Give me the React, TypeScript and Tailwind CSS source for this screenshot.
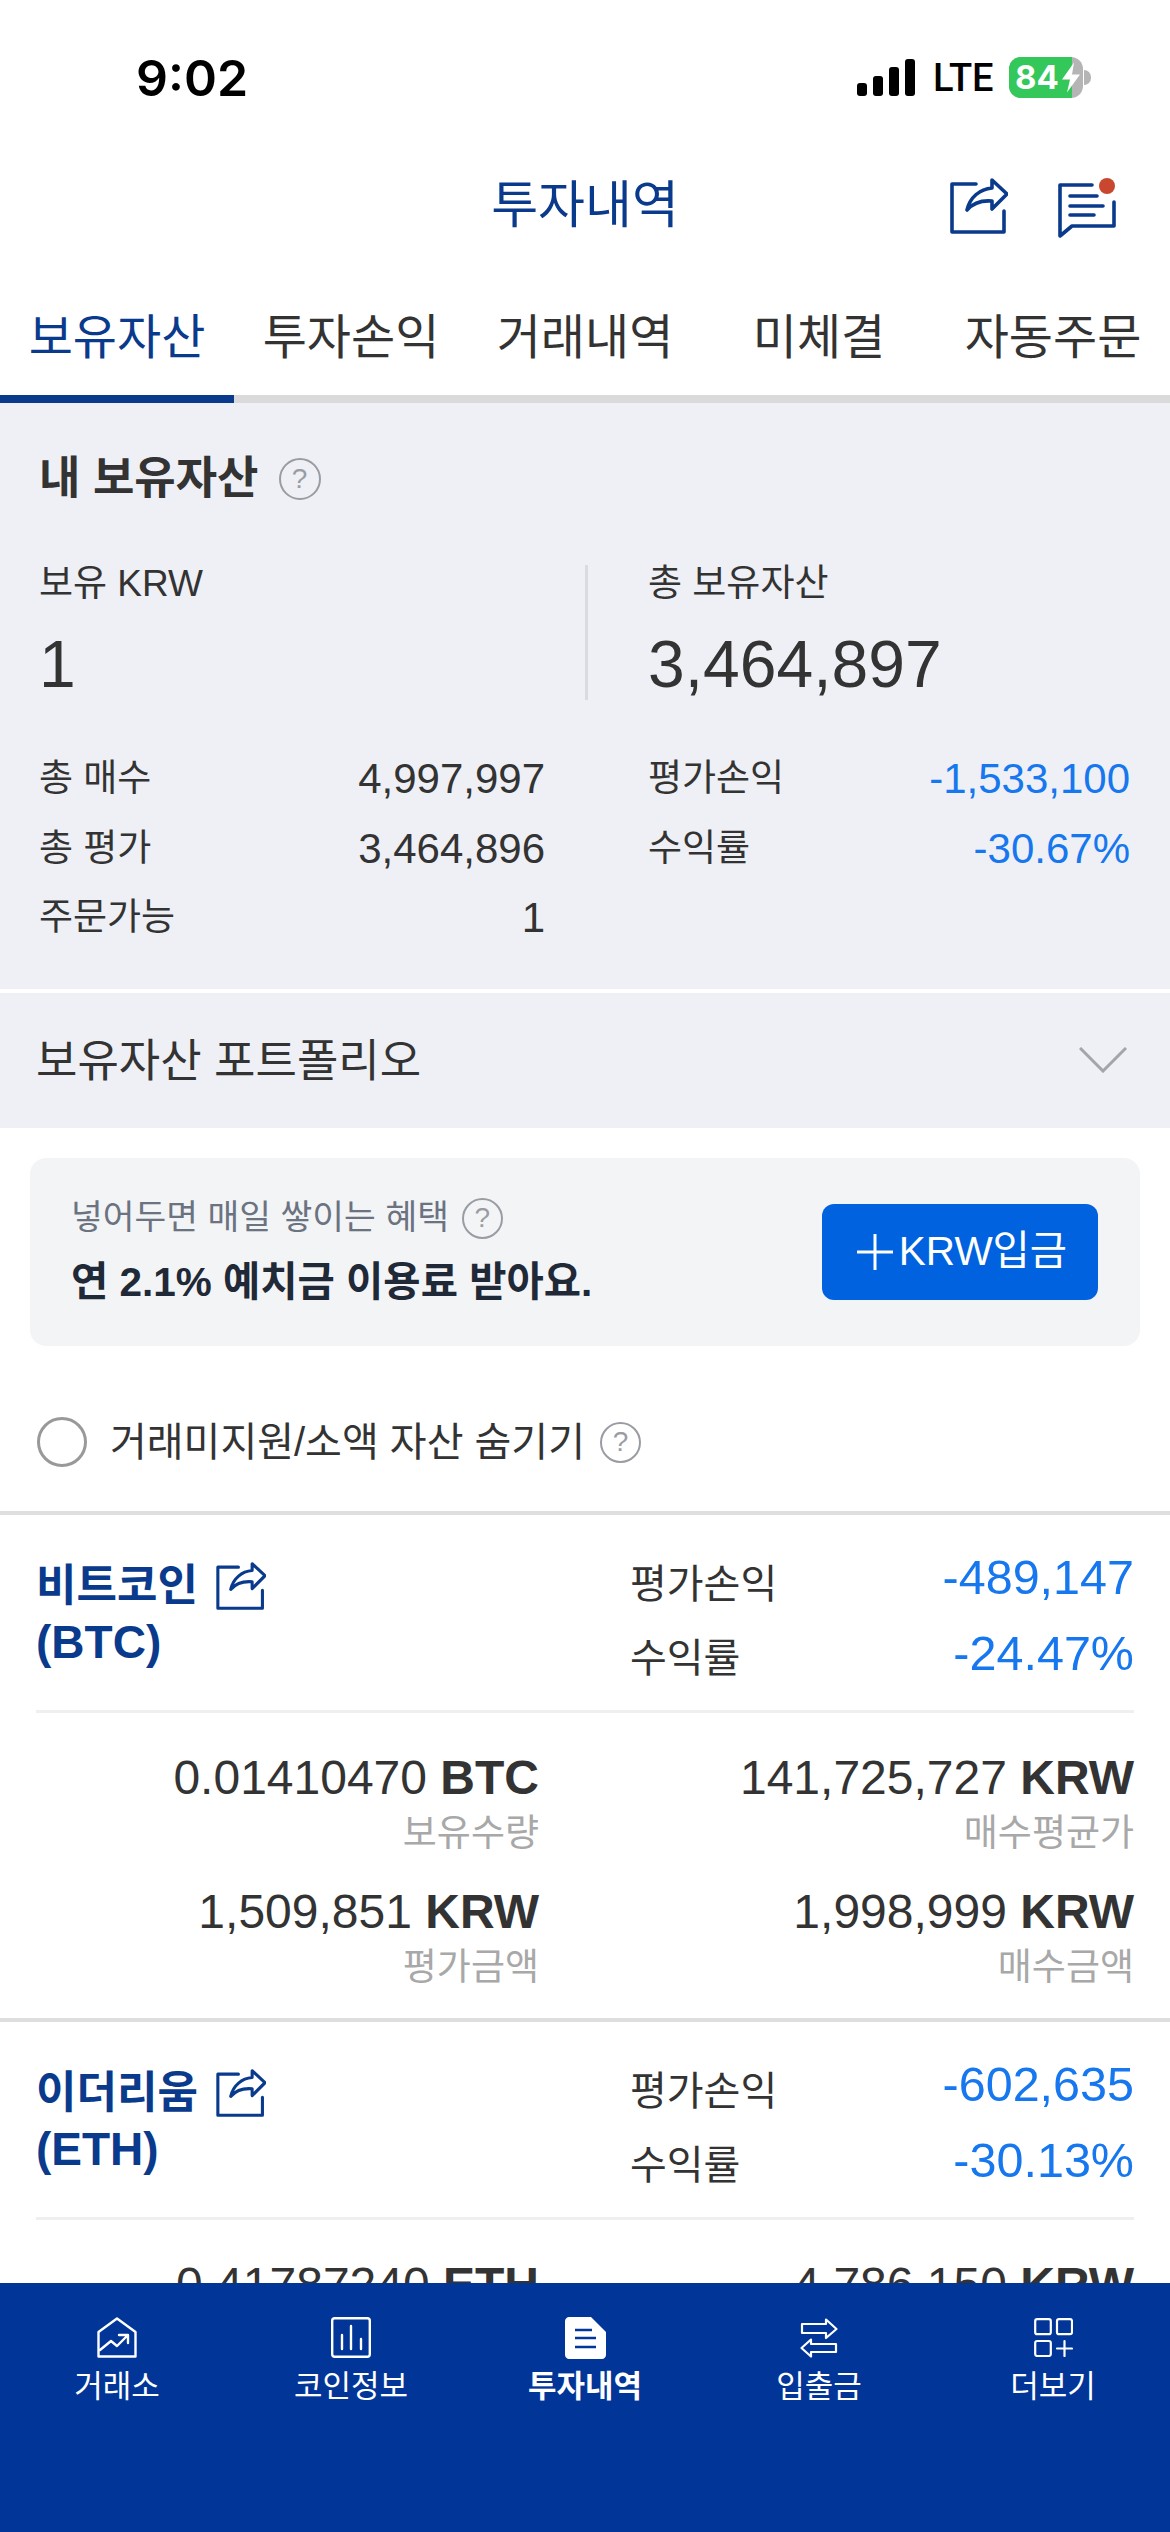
const BLUE = "text-[#0a3a8c]";

const ShareIcon = ({ className }: { className: string }) => (
  <svg viewBox="0 0 58 56" fill="none" stroke="#0a3a8c" strokeWidth="3.6" strokeLinecap="round" strokeLinejoin="round" className={className}>
    <path d="M26 6H2V54H54V33" />
    <path d="M42 2L57 16L42 31V23C30 22 23 25 17 32C20 19 30 11 42 10Z" />
  </svg>
);

const MessageIcon = () => (
  <svg viewBox="0 0 58 60" fill="none" stroke="#0a3a8c" strokeWidth="3.6" strokeLinecap="round" strokeLinejoin="round" className="w-[58px] h-[60px] ml-[50px]">
    <path d="M34 7H2V58L14 48H56V24" />
    <path d="M12 18H39M12 28H45M12 37H36" />
    <circle cx="49" cy="8" r="8" fill="#c9472f" stroke="none" />
  </svg>
);

const Help = ({ className }: { className: string }) => (
  <span className={`flex items-center justify-center rounded-full border-[2.5px] border-[#9a9ca3] text-[#9a9ca3] text-[28px] leading-none shrink-0 ${className}`}>?</span>
);

const Signal = () => (
  <div className="flex items-end gap-[6px] h-[37px]">
    <div className="w-[10px] h-[13px] rounded-[3px] bg-black" />
    <div className="w-[10px] h-[20px] rounded-[3px] bg-black" />
    <div className="w-[10px] h-[29px] rounded-[3px] bg-black" />
    <div className="w-[10px] h-[37px] rounded-[3px] bg-black" />
  </div>
);

const Battery = () => (
  <div className="flex items-center">
    <div className="relative w-[74px] h-[41px] rounded-[12px] overflow-hidden bg-[#b5b5b5]">
      <div className="w-[63px] h-full bg-[#34c759]" />
      <span className="absolute left-[6px] top-0 h-full flex items-center text-white font-bold text-[33px] font-['Inter']">84</span>
      <svg viewBox="0 0 20 30" className="absolute left-[52px] top-[5px] w-[20px] h-[31px]">
        <path d="M13 0L1 17H9L6 30L19 12H11Z" fill="#fff" />
      </svg>
    </div>
    <div className="w-[7px] h-[15px] rounded-r-full bg-[#b5b5b5] ml-[1px]" />
  </div>
);

const tabs = ["보유자산", "투자손익", "거래내역", "미체결", "자동주문"];

const Row = ({ label, value, blue }: { label: string; value?: string; blue?: boolean }) => (
  <div className="h-[69.5px] flex items-center justify-between">
    <span className="text-[37px] text-[#333]">{label}</span>
    <span className={`text-[42px] ${blue ? "text-[#1677ee]" : "text-[#333]"}`}>{value}</span>
  </div>
);

const Amount = ({ value, unit, label }: { value: string; unit: string; label: string }) => (
  <div className="text-right">
    <div className="h-[56px] leading-[56px] text-[48px] text-[#333] whitespace-nowrap">
      {value} <b>{unit}</b>
    </div>
    <div className="h-[40px] leading-[40px] mt-[8px] text-[37px] text-[#a8a8a8]">{label}</div>
  </div>
);

type Coin = {
  name: string;
  symbol: string;
  pnl: string;
  rate: string;
  amounts: { value: string; unit: string; label: string }[];
};

const coins: Coin[] = [
  {
    name: "비트코인",
    symbol: "BTC",
    pnl: "-489,147",
    rate: "-24.47%",
    amounts: [
      { value: "0.01410470", unit: "BTC", label: "보유수량" },
      { value: "141,725,727", unit: "KRW", label: "매수평균가" },
      { value: "1,509,851", unit: "KRW", label: "평가금액" },
      { value: "1,998,999", unit: "KRW", label: "매수금액" },
    ],
  },
  {
    name: "이더리움",
    symbol: "ETH",
    pnl: "-602,635",
    rate: "-30.13%",
    amounts: [
      { value: "0.41787240", unit: "ETH", label: "보유수량" },
      { value: "4,786,150", unit: "KRW", label: "매수평균가" },
    ],
  },
];

const CoinCard = ({ coin }: { coin: Coin }) => (
  <div className="border-b-4 border-[#dedede]">
    <div className="mx-[36px] h-[198px] border-b-[3px] border-[#efefef] flex justify-between">
      <div className={`pt-[46px] font-bold ${BLUE}`}>
        <div className="h-[50px] flex items-center leading-none text-[44px]">
          {coin.name}
          <ShareIcon className="w-[50px] h-[48px] ml-[18px]" />
        </div>
        <div className="h-[50px] mt-[6px] flex items-center leading-none text-[46px]">({coin.symbol})</div>
      </div>
      <div className="w-[504px] pt-[35px] flex flex-col gap-[16px]">
        <div className="h-[60px] flex items-center justify-between">
          <span className="text-[40px] text-[#333] pt-[8px]">평가손익</span>
          <span className="text-[48.5px] text-[#1677ee] pb-[4px]">{coin.pnl}</span>
        </div>
        <div className="h-[60px] flex items-center justify-between">
          <span className="text-[40px] text-[#333] pt-[5px]">수익률</span>
          <span className="text-[48.5px] text-[#1677ee] pb-[4px]">{coin.rate}</span>
        </div>
      </div>
    </div>
    <div className="grid grid-cols-[503px_595px] px-[36px] pt-[37px] pb-[30px] gap-y-[30px]">
      {coin.amounts.map((a) => (
        <Amount key={a.label} value={a.value} unit={a.unit} label={a.label} />
      ))}
    </div>
  </div>
);

const navIcon = "fill-none stroke-white";

const nav = [
  {
    label: "거래소",
    icon: (
      <svg viewBox="0 0 40 41" strokeWidth="2.4" strokeLinecap="round" strokeLinejoin="round" className={`w-[40px] h-[41px] ${navIcon}`}>
        <path d="M20 1.5L38.5 15V39.5H1.5V15Z" />
        <path d="M3 33L14 24L20 29L30 19M22 18H31V26" />
      </svg>
    ),
  },
  {
    label: "코인정보",
    icon: (
      <svg viewBox="0 0 40 41" strokeWidth="2.4" strokeLinecap="round" strokeLinejoin="round" className={`w-[40px] h-[41px] ${navIcon}`}>
        <rect x="1.2" y="1.2" width="37.6" height="38.6" rx="2.5" />
        <path d="M11 18V32M20 9V32M30 22V32" />
      </svg>
    ),
  },
  {
    label: "투자내역",
    active: true,
    icon: (
      <svg viewBox="0 0 41 42" className="w-[41px] h-[42px]">
        <path d="M4 0H26L41 15V38C41 40 39 42 37 42H4C2 42 0 40 0 38V4C0 2 2 0 4 0Z" fill="#fff" />
        <path d="M10 13H27M10 21H31M10 30H31" stroke="#013597" strokeWidth="2.4" />
      </svg>
    ),
  },
  {
    label: "입출금",
    icon: (
      <svg viewBox="0 0 38 40" strokeWidth="2.2" strokeLinejoin="round" className={`w-[38px] h-[40px] ${navIcon}`}>
        <path d="M2 6H26V1.5L36.5 11L26 20V15H2Z" />
        <path d="M36 26H11V21.5L1.5 30L11 38.5V34H36Z" />
      </svg>
    ),
  },
  {
    label: "더보기",
    icon: (
      <svg viewBox="0 0 39 39" strokeWidth="2.2" strokeLinecap="round" className={`w-[39px] h-[39px] ${navIcon}`}>
        <rect x="1.2" y="1.2" width="15.6" height="15" rx="2" />
        <rect x="23" y="1.2" width="15" height="15" rx="2" />
        <rect x="1.2" y="23" width="15.6" height="15" rx="2" />
        <path d="M23 30.5H38M30.5 23V38" />
      </svg>
    ),
  },
];

export default function App() {
  return (
    <div className="w-[1170px] h-[2532px] overflow-hidden flex flex-col bg-white font-['Liberation_Sans','Noto_Sans_CJK_KR',sans-serif]">
      <div className="flex-1 min-h-0 overflow-hidden">
        {/* status bar */}
        <div className="h-[150px] flex items-start justify-between pt-[50px] pl-[136px] pr-[79px]">
          <span className="font-['Inter'] font-semibold text-[50px] leading-[56px] text-black">9:02</span>
          <div className="flex items-center gap-[19px] pt-[7px]">
            <Signal />
            <span className="font-['Roboto'] font-medium text-[38px] leading-none text-black -ml-[1px] w-[57px]">LTE</span>
            <Battery />
          </div>
        </div>

        {/* header */}
        <div className="relative h-[110px] flex items-center justify-center">
          <span className={`text-[51px] pt-[3px] ${BLUE}`}>투자내역</span>
          <div className="absolute left-[950px] top-[28px] flex items-start">
            <ShareIcon className="w-[58px] h-[56px]" />
            <MessageIcon />
          </div>
        </div>

        {/* tabs */}
        <div className="h-[143px] grid grid-cols-5 border-b-[8px] border-[#dadada]">
          {tabs.map((t, i) => (
            <div key={t} className={`relative flex items-start justify-center pt-[46px] text-[48px] leading-[64px] ${i === 0 ? BLUE : "text-[#333]"}`}>
              {t}
              {i === 0 && <div className="absolute left-0 right-0 -bottom-[8px] h-[8px] bg-[#0a3a8c]" />}
            </div>
          ))}
        </div>

        {/* summary */}
        <div className="bg-[#eef0f5] pt-[46px] pb-[36px] px-[39px] border-b-4 border-white">
          <div className="h-[60px] flex items-center gap-[20px]">
            <span className="text-[45px] font-bold text-[#333]">내 보유자산</span>
            <Help className="w-[42px] h-[42px]" />
          </div>
          <div className="mt-[56px] flex">
            <div className="w-[549px] h-[135px] border-r-[3px] border-[#d9dbdf]">
              <div className="h-[38px] leading-[38px] text-[37px] text-[#333]">보유 KRW</div>
              <div className="h-[70px] leading-[70px] mt-[26px] text-[66px] text-[#333]">1</div>
            </div>
            <div className="pl-[60px]">
              <div className="h-[38px] leading-[38px] text-[37px] text-[#333]">총 보유자산</div>
              <div className="h-[70px] leading-[70px] mt-[26px] text-[66px] text-[#333]">3,464,897</div>
            </div>
          </div>
          <div className="mt-[44px] grid grid-cols-[506px_482px] gap-x-[103px]">
            <div>
              <Row label="총 매수" value="4,997,997" />
              <Row label="총 평가" value="3,464,896" />
              <Row label="주문가능" value="1" />
            </div>
            <div>
              <Row label="평가손익" value="-1,533,100" blue />
              <Row label="수익률" value="-30.67%" blue />
            </div>
          </div>
        </div>

        {/* portfolio */}
        <div className="h-[135px] bg-[#eef0f5] flex items-center justify-between pl-[36px] pr-[43px]">
          <span className="text-[45px] pt-[3px] text-[#333]">보유자산 포트폴리오</span>
          <svg viewBox="0 0 48 26" fill="none" stroke="#a3a5aa" strokeWidth="3" className="w-[48px] h-[26px]">
            <path d="M1 1L24 24L47 1" />
          </svg>
        </div>

        {/* promo */}
        <div className="mx-[30px] mt-[30px] h-[188px] rounded-[16px] bg-[#f3f4f6] flex items-center justify-between pl-[41px] pr-[42px]">
          <div>
            <div className="flex items-center gap-[13px] h-[44px]">
              <span className="text-[34.5px] text-[#6b7280]">넣어두면 매일 쌓이는 혜택</span>
              <Help className="w-[41px] h-[41px]" />
            </div>
            <div className="mt-[17px] text-[40.5px] leading-[50px] font-bold text-[#1f2937]">연 2.1% 예치금 이용료 받아요.</div>
          </div>
          <div className="w-[276px] h-[96px] rounded-[12px] bg-[#0062df] flex items-center justify-center gap-[6px] pl-[4px] text-white text-[40.5px]">
            <svg viewBox="0 0 36 36" stroke="#fff" strokeWidth="3" className="w-[36px] h-[36px]">
              <path d="M0 18H36M18 0V36" />
            </svg>
            KRW입금
          </div>
        </div>

        {/* hide small assets */}
        <div className="h-[169px] flex items-center pl-[37px] pt-[28px] border-b-4 border-[#dedede]">
          <span className="w-[50px] h-[50px] rounded-full border-[3px] border-[#999]" />
          <span className="ml-[23px] text-[40px] text-[#333]">거래미지원/소액 자산 숨기기</span>
          <Help className="w-[41px] h-[41px] ml-[15px]" />
        </div>

        {coins.map((c) => (
          <CoinCard key={c.symbol} coin={c} />
        ))}
      </div>

      {/* bottom nav */}
      <div className="h-[249px] shrink-0 bg-[#013597] grid grid-cols-5 pt-[33px] items-start">
        {nav.map((n) => (
          <div key={n.label} className="flex flex-col items-center text-white">
            <div className="h-[43px] flex items-center">{n.icon}</div>
            <span className={`mt-[6px] text-[31px] leading-[44px] ${n.active ? "font-bold" : ""}`}>{n.label}</span>
          </div>
        ))}
      </div>
    </div>
  );
}
